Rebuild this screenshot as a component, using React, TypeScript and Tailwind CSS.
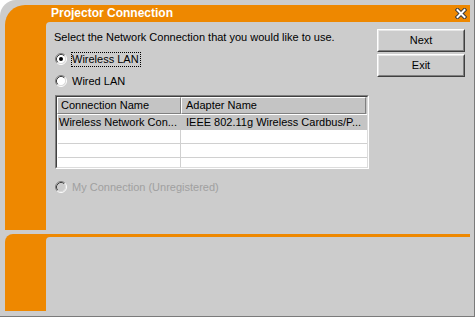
import React from 'react';

const ORANGE = 'bg-[#ee8800]';

function Radio({ checked, disabled }: { checked?: boolean; disabled?: boolean }) {
  return (
    <svg width="12" height="12" viewBox="0 0 12 12" className="shrink-0">
      <circle cx="6" cy="6" r="4.5" fill={disabled ? '#cccccc' : '#ffffff'} />
      <path d="M2.11 9.89 A5.5 5.5 0 0 1 9.89 2.11" fill="none" stroke="#808080" />
      <path d="M9.89 2.11 A5.5 5.5 0 0 1 2.11 9.89" fill="none" stroke="#ffffff" />
      <path d="M2.82 9.18 A4.5 4.5 0 0 1 9.18 2.82" fill="none" stroke="#404040" />
      <path d="M9.18 2.82 A4.5 4.5 0 0 1 2.82 9.18" fill="none" stroke="#dcdcdc" />
      {checked && <circle cx="6" cy="6" r="2" fill="#000000" />}
    </svg>
  );
}

function Button({ label }: { label: string }) {
  return (
    <div className="w-[88px] h-[23px] border border-t-white border-l-white border-r-[#404040] border-b-[#404040] bg-[#cccccc]">
      <div className="h-full border border-t-[#e6e6e6] border-l-[#e6e6e6] border-r-[#808080] border-b-[#808080] flex items-center justify-center leading-[13px]">
        {label}
      </div>
    </div>
  );
}

function CloseIcon() {
  return (
    <svg width="12" height="11" viewBox="0 0 12 11">
      <path d="M2.5 2 L9.5 9 M9.5 2 L2.5 9" stroke="#3a3a3a" strokeWidth="4" strokeLinecap="square" />
      <path d="M2.5 2 L9.5 9 M9.5 2 L2.5 9" stroke="#ffffff" strokeWidth="2" strokeLinecap="square" />
    </svg>
  );
}

export default function App() {
  return (
    <div className="w-[475px] h-[317px] bg-white font-['Liberation_Sans',Arial,sans-serif] text-[11px] text-black">
      <div className="w-full h-full flex flex-col bg-[#cccccc] rounded-tl-[16px] border-r border-b border-[#7a7a7a] pt-[5px] pl-[5px] pr-[4px] pb-[5px]">
        {/* Main panel */}
        <div className={`h-[225px] flex flex-col ${ORANGE} rounded-tl-[20px]`}>
          <div className="h-[17px] shrink-0 flex items-center justify-between pl-[46px] pr-[3px]">
            <span className="text-[12px] font-bold text-white leading-[17px]">Projector Connection</span>
            <CloseIcon />
          </div>
          <div className="flex-1 flex">
            <div className="w-[41px] shrink-0" />
            <div className="flex-1 flex bg-[#cccccc] rounded-tl-[4px]">
              {/* Left: choices */}
              <div className="flex-1 flex flex-col pl-[8px]">
                <div className="mt-[9px] leading-[13px]">Select the Network Connection that you would like to use.</div>

                <div className="mt-[7px] h-[16px] flex items-center ml-px">
                  <Radio checked />
                  <span className="ml-[4px] border border-dotted border-black leading-[13px] pr-px">Wireless LAN</span>
                </div>
                <div className="mt-[6px] h-[16px] flex items-center ml-px">
                  <Radio />
                  <span className="ml-[4px] border border-transparent leading-[13px]">Wired LAN</span>
                </div>

                {/* Connection list */}
                <div className="mt-[6px] ml-px w-[314px] h-[74px] border border-t-[#808080] border-l-[#808080] border-r-white border-b-white">
                  <div className="h-full flex flex-col bg-white border border-t-[#404040] border-l-[#404040] border-r-[#dcdcdc] border-b-[#dcdcdc]">
                    <div className="h-[17px] shrink-0 flex bg-[#c4c4c4]">
                      <div className="w-[124px] border border-t-white border-l-white border-r-[#808080] border-b-[#808080] pl-[3px] leading-[15px]">
                        Connection Name
                      </div>
                      <div className="w-[185px] border border-t-white border-l-white border-r-[#808080] border-b-[#808080] pl-[4px] leading-[15px]">
                        Adapter Name
                      </div>
                    </div>
                    <div className="flex-1 flex flex-col pt-px">
                      <div className="h-[15px] ml-px flex bg-[#c4c4c4] border-b border-[#c4c4c4] leading-[14px]">
                        <div className="w-[123px] pl-px whitespace-nowrap overflow-hidden">Wireless Network Con...</div>
                        <div className="flex-1 pl-[5px] whitespace-nowrap overflow-hidden">IEEE 802.11g Wireless Cardbus/P...</div>
                      </div>
                      <div className="h-[14px] ml-px flex border-b border-[#d0d0d0]">
                        <div className="w-[123px] border-r border-[#d0d0d0]" />
                      </div>
                      <div className="h-[14px] ml-px flex border-b border-[#d0d0d0]">
                        <div className="w-[123px] border-r border-[#d0d0d0]" />
                      </div>
                      <div className="flex-1 ml-px flex">
                        <div className="w-[123px] border-r border-[#d0d0d0]" />
                      </div>
                    </div>
                  </div>
                </div>

                <div className="mt-[10px] h-[16px] flex items-center ml-px">
                  <Radio disabled />
                  <span className="ml-[4px] border border-transparent leading-[13px] text-[#a0a0a0]">My Connection (Unregistered)</span>
                </div>
              </div>

              {/* Right: buttons */}
              <div className="shrink-0 flex flex-col gap-[2px] pt-[7px] pr-[5px]">
                <Button label="Next" />
                <Button label="Exit" />
              </div>
            </div>
          </div>
        </div>

        {/* Lower panel */}
        <div className={`mt-[4px] flex-1 flex flex-col ${ORANGE} rounded-tl-[8px]`}>
          <div className="h-[3px] shrink-0" />
          <div className="flex-1 flex">
            <div className="w-[41px] shrink-0" />
            <div className="flex-1 bg-[#cccccc] rounded-tl-[4px]" />
          </div>
        </div>
      </div>
    </div>
  );
}
